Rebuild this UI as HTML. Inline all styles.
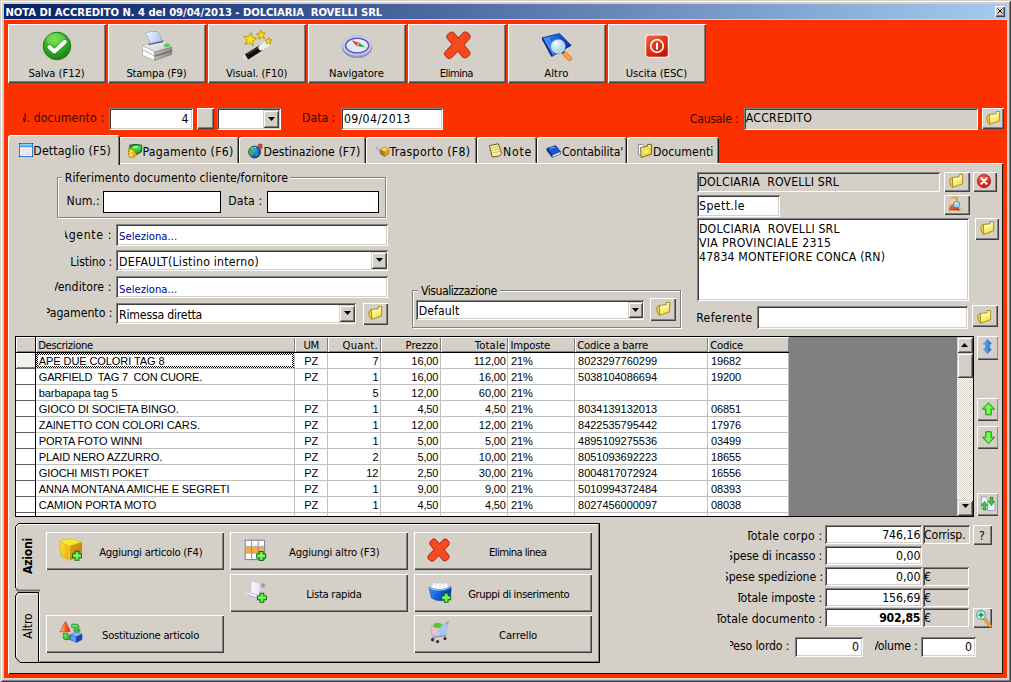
<!DOCTYPE html>
<html><head><meta charset="utf-8"><title>NOTA DI ACCREDITO</title>
<style>
html,body{margin:0;padding:0;}
body{width:1011px;height:682px;overflow:hidden;background:#d4d0c8;position:relative;}
div{position:absolute;box-sizing:border-box;}
svg{position:absolute;overflow:visible;}
.rb{background:#d4d0c8;box-shadow:inset 1px 1px 0 #fff,inset -1px -1px 0 #404040,inset -2px -2px 0 #808080;}
.sk{box-shadow:inset 1px 1px 0 #808080,inset -1px -1px 0 #fff,inset 2px 2px 0 #404040,inset -2px -2px 0 #d4d0c8;}
.sk1{box-shadow:inset 1px 1px 0 #808080,inset -1px -1px 0 #fff;}
.gb{border:1px solid #808080;box-shadow:1px 1px 0 #fff,inset 1px 1px 0 #fff;}

.tab{background:#d4d0c8;border-radius:3px 3px 0 0;box-shadow:inset 1px 1px 0 #fff,inset -1px 0 0 #181818,inset -2px 0 0 #808080;}
.rb2{background:#d4d0c8;box-shadow:inset 1px 1px 0 #fff,inset 0 -1px 0 #404040,inset -1px 0 0 #909090,inset 0 -2px 0 #808080;}
.hd{background:#d4d0c8;box-shadow:inset 1px 1px 0 #fff,inset -1px -1px 0 #808080;}
.dd{background:#d4d0c8;box-shadow:inset 1px 1px 0 #d4d0c8,inset -1px -1px 0 #404040,inset 2px 2px 0 #fff,inset -2px -2px 0 #808080;}

</style></head><body>
<div style="left:0px;top:0px;width:1011px;height:682px;background:#d4d0c8;box-shadow:inset 1px 1px 0 #d4d0c8,inset -1px -1px 0 #404040,inset 2px 2px 0 #fff,inset -2px -2px 0 #808080;"></div>
<div style="left:4px;top:4px;width:1003px;height:15px;background:linear-gradient(90deg,#0a246a 0%,#0a246a 2%,#a6caf0 100%);"></div>
<span style="position:absolute;left:5.50px;top:5px;line-height:16px;white-space:pre;color:#fff;letter-spacing:-0.062px;font-family:'DejaVu Sans Condensed','DejaVu Sans','Liberation Sans',sans-serif;font-size:11.2px;font-weight:bold;font-stretch:condensed;">NOTA DI ACCREDITO N. 4 del 09/04/2013 - DOLCIARIA  ROVELLI SRL</span>
<div class="rb" style="left:995px;top:6px;width:10px;height:11px;"></div>
<svg style="left:997px;top:8px" width="6" height="6"><path d="M0.5 0.5L5.5 5.5M5.5 0.5L0.5 5.5" stroke="#000" stroke-width="1"/></svg>
<div style="left:4px;top:20px;width:1003px;height:658px;background:#fb3200;"></div>
<div class="rb" style="left:8px;top:24px;width:98px;height:59px;"></div>
<svg style="left:41px;top:30px" width="32" height="32" viewBox="0 0 32 32"><defs><radialGradient id="g1" cx="0.4" cy="0.25" r="0.85"><stop offset="0" stop-color="#66dc44"/><stop offset="0.5" stop-color="#2fae22"/><stop offset="1" stop-color="#137414"/></radialGradient></defs><circle cx="16" cy="16" r="13.8" fill="url(#g1)" stroke="#1a741a" stroke-width="0.9"/><ellipse cx="14.6" cy="9.4" rx="9.6" ry="6" fill="#a8f088" opacity="0.28"/><path d="M8.4 17L13.4 21.5L23.9 11.7" fill="none" stroke="#1c7c1c" stroke-width="5.2" stroke-linecap="round" stroke-linejoin="round" opacity="0.45"/><path d="M8.4 17L13.4 21.5L23.9 11.7" fill="none" stroke="#fff" stroke-width="3.9" stroke-linecap="round" stroke-linejoin="round"/></svg>
<span style="position:absolute;left:28.40px;top:66px;line-height:16px;white-space:pre;color:#000;letter-spacing:-0.082px;font-family:'DejaVu Sans Condensed','DejaVu Sans','Liberation Sans',sans-serif;font-size:11.2px;font-weight:normal;font-stretch:condensed;">Salva (F12)</span>
<div class="rb" style="left:108px;top:24px;width:98px;height:59px;"></div>
<svg style="left:136px;top:26px" width="44" height="40" viewBox="0 0 44 40"><defs><linearGradient id="g2" x1="0" y1="0" x2="1" y2="0.4"><stop offset="0" stop-color="#f4f8ff"/><stop offset="1" stop-color="#b4ccf0"/></linearGradient><radialGradient id="g3"><stop offset="0" stop-color="#38b848"/><stop offset="0.6" stop-color="#7cd488"/><stop offset="1" stop-color="#c8e8c8" stop-opacity="0"/></radialGradient><linearGradient id="g4" x1="0" y1="0" x2="1" y2="0"><stop offset="0" stop-color="#b8b8b6"/><stop offset="1" stop-color="#8c8c8a"/></linearGradient><linearGradient id="g5" x1="0" y1="0" x2="1" y2="1"><stop offset="0" stop-color="#f4f4f2"/><stop offset="1" stop-color="#d0d0ce"/></linearGradient></defs><path d="M6.5 19.4L14 17.8L28.2 14.7L35.8 21L18.8 26z" fill="url(#g5)" stroke="#a8a8a8" stroke-width="0.5"/><path d="M13.2 18.2L26.6 15.4" stroke="#50545c" stroke-width="1.6" stroke-linecap="round"/><path d="M9.4 7.2Q15 4.2 21.4 5.6Q25 10 25.8 15L14 17.6Q12.6 11.5 9.4 7.2z" fill="url(#g2)" stroke="#8c9cb8" stroke-width="0.7"/><path d="M6.5 19.4L18.8 26V34.6L6.5 29.5z" fill="#fcfcfc" stroke="#a0a0a0" stroke-width="0.6"/><path d="M18.8 26L35.8 21V28.4L18.8 34.6z" fill="url(#g4)" stroke="#787878" stroke-width="0.6"/><path d="M6.5 23.6L18.8 30.2" fill="none" stroke="#b4b4b2" stroke-width="1"/><path d="M18.8 30.2L35.8 24.8" fill="none" stroke="#6c6c6a" stroke-width="1.3"/><ellipse cx="31" cy="19.4" rx="5" ry="3" fill="url(#g3)"/></svg>
<span style="position:absolute;left:126.40px;top:66px;line-height:16px;white-space:pre;color:#000;letter-spacing:-0.183px;font-family:'DejaVu Sans Condensed','DejaVu Sans','Liberation Sans',sans-serif;font-size:11.2px;font-weight:normal;font-stretch:condensed;">Stampa (F9)</span>
<div class="rb" style="left:208px;top:24px;width:98px;height:59px;"></div>
<svg style="left:236px;top:26px" width="44" height="40" viewBox="0 0 44 40"><path d="M8.8 32L30.4 18.4" stroke="#f4f4f4" stroke-width="5.6" stroke-linecap="round"/><path d="M8.8 32L30.4 18.4" stroke="#b0b0b8" stroke-width="6.4" stroke-linecap="round" opacity="0.35"/><path d="M10.6 30.9L25.2 21.7" stroke="#0c0c0c" stroke-width="6"/><path d="M11.5 28.2L24.6 20" stroke="#4a4a52" stroke-width="1.1"/><path d="M25.2 21.7L30.4 18.4" stroke="#e8f0f0" stroke-width="5.6" stroke-linecap="round"/><polygon points="15.2,6.6 16.3,11.3 20.9,12.5 16.8,15.0 17.1,19.8 13.5,16.6 9.0,18.4 10.9,13.9 7.8,10.2 12.6,10.7" fill="#f8e418" stroke="#b89000" stroke-width="0.9" stroke-linejoin="round"/><polygon points="24.5,4.2 26.2,7.1 29.5,6.9 27.3,9.4 28.5,12.5 25.5,11.1 22.9,13.2 23.3,9.9 20.5,8.2 23.7,7.4" fill="#f8e418" stroke="#b89000" stroke-width="0.9" stroke-linejoin="round"/><polygon points="32.5,11.4 33.5,13.7 35.9,13.9 34.0,15.5 34.6,17.9 32.5,16.6 30.4,17.9 31.0,15.5 29.1,13.9 31.5,13.7" fill="#f8e418" stroke="#b89000" stroke-width="0.9" stroke-linejoin="round"/></svg>
<span style="position:absolute;left:226.00px;top:66px;line-height:16px;white-space:pre;color:#000;letter-spacing:-0.115px;font-family:'DejaVu Sans Condensed','DejaVu Sans','Liberation Sans',sans-serif;font-size:11.2px;font-weight:normal;font-stretch:condensed;">Visual. (F10)</span>
<div class="rb" style="left:308px;top:24px;width:98px;height:59px;"></div>
<svg style="left:336px;top:26px" width="44" height="40" viewBox="0 0 44 40"><ellipse cx="21.2" cy="21.6" rx="14.6" ry="10" fill="#9a9ad0" stroke="#7c7cb8" stroke-width="0.8"/><ellipse cx="21.2" cy="19.4" rx="14.6" ry="10" fill="#d0d0f2" stroke="#a8a8dc" stroke-width="0.6"/><ellipse cx="21.2" cy="19.6" rx="11.6" ry="7.4" fill="#e2e8fc" stroke="#5c5ca4" stroke-width="1.5"/><path d="M12 17.4Q21 10.4 30.4 17" fill="none" stroke="#fff" stroke-width="1" opacity="0.7"/><path d="M15.4 14L23.2 17L20.6 20z" fill="#e63030"/><path d="M23.2 17L29.6 21.2L20.6 20z" fill="#18a030"/><circle cx="21.9" cy="18.5" r="1.1" fill="#f4e060"/></svg>
<span style="position:absolute;left:328.90px;top:66px;line-height:16px;white-space:pre;color:#000;letter-spacing:-0.023px;font-family:'DejaVu Sans Condensed','DejaVu Sans','Liberation Sans',sans-serif;font-size:11.2px;font-weight:normal;font-stretch:condensed;">Navigatore</span>
<div class="rb" style="left:408px;top:24px;width:98px;height:59px;"></div>
<svg style="left:436px;top:26px" width="44" height="40" viewBox="0 0 44 40"><defs><linearGradient id="g6" x1="0" y1="0" x2="0" y2="1"><stop offset="0" stop-color="#fc6838"/><stop offset="1" stop-color="#f03010"/></linearGradient></defs><rect x="-14.6" y="-4" width="29.2" height="8" rx="3.2" transform="translate(22.4 19) rotate(50.3)" fill="#f8461c" stroke="#a82408" stroke-width="1.6"/><rect x="-15.6" y="-4" width="31.2" height="8" rx="3.2" transform="translate(21.4 19.2) rotate(-46.5)" fill="#f8461c" stroke="#a82408" stroke-width="1.6"/><rect x="-14.6" y="-4" width="29.2" height="8" rx="3.2" transform="translate(22.4 19) rotate(50.3)" fill="#f84a20"/><rect x="-15.6" y="-4" width="31.2" height="8" rx="3.2" transform="translate(21.4 19.2) rotate(-46.5)" fill="#f84a20"/></svg>
<span style="position:absolute;left:439.70px;top:66px;line-height:16px;white-space:pre;color:#000;letter-spacing:-0.552px;font-family:'DejaVu Sans Condensed','DejaVu Sans','Liberation Sans',sans-serif;font-size:11.2px;font-weight:normal;font-stretch:condensed;">Elimina</span>
<div class="rb" style="left:508px;top:24px;width:98px;height:59px;"></div>
<svg style="left:536px;top:26px" width="44" height="40" viewBox="0 0 44 40"><defs><linearGradient id="g7" x1="0" y1="0.2" x2="1" y2="0.6"><stop offset="0" stop-color="#3488f4"/><stop offset="0.5" stop-color="#1458dc"/><stop offset="1" stop-color="#0830a0"/></linearGradient><radialGradient id="g8" cx="0.35" cy="0.3" r="0.8"><stop offset="0" stop-color="#f0fbff"/><stop offset="1" stop-color="#8ccae8"/></radialGradient></defs><path d="M6 11.8L23.4 7.6L35.2 19.4L15.8 30.5z" fill="url(#g7)" stroke="#0a2c94" stroke-width="0.8" stroke-linejoin="round"/><path d="M6.4 12.6L16 30.2" stroke="#0a2a88" stroke-width="1.6"/><path d="M9 12.4L18.2 29.4M11.8 11.6L20.6 28.2" stroke="#7cb4fc" stroke-width="1.1" opacity="0.85"/><path d="M27 26L29 28" stroke="#1c3c84" stroke-width="3.2" stroke-linecap="round"/><path d="M29.2 28.2L33.6 32.4" stroke="#d87818" stroke-width="4.8" stroke-linecap="round"/><path d="M29.2 28.2L33.6 32.4" stroke="#f8a848" stroke-width="3" stroke-linecap="round"/><circle cx="22" cy="20.4" r="6.5" fill="url(#g8)" stroke="#d4e6f8" stroke-width="1.5"/><circle cx="22" cy="20.4" r="7.4" fill="none" stroke="#5c7cac" stroke-width="0.6"/></svg>
<span style="position:absolute;left:544.20px;top:66px;line-height:16px;white-space:pre;color:#000;letter-spacing:0.107px;font-family:'DejaVu Sans Condensed','DejaVu Sans','Liberation Sans',sans-serif;font-size:11.2px;font-weight:normal;font-stretch:condensed;">Altro</span>
<div class="rb" style="left:608px;top:24px;width:98px;height:59px;"></div>
<svg style="left:636px;top:26px" width="44" height="40" viewBox="0 0 44 40"><defs><linearGradient id="g9" x1="0" y1="0" x2="0.6" y2="1"><stop offset="0" stop-color="#f86840"/><stop offset="0.5" stop-color="#e43820"/><stop offset="1" stop-color="#c01808"/></linearGradient></defs><rect x="9.2" y="8.4" width="23.6" height="23.4" rx="3" fill="#fff5ec"/><rect x="10.2" y="9.4" width="21.6" height="21.4" rx="2.5" fill="url(#g9)"/><circle cx="21" cy="20" r="6.3" fill="none" stroke="#fff8e8" stroke-width="1.7"/><path d="M21 16.8V23.4" stroke="#fff" stroke-width="2"/></svg>
<span style="position:absolute;left:625.80px;top:66px;line-height:16px;white-space:pre;color:#000;letter-spacing:-0.045px;font-family:'DejaVu Sans Condensed','DejaVu Sans','Liberation Sans',sans-serif;font-size:11.2px;font-weight:normal;font-stretch:condensed;">Uscita (ESC)</span>
<div style="left:22.8px;top:110px;width:84.2px;height:16px;overflow:hidden"><span style="position:absolute;right:2.78px;top:0;line-height:16px;white-space:pre;color:#360900;letter-spacing:0.118px;font-family:'DejaVu Sans Condensed','DejaVu Sans','Liberation Sans',sans-serif;font-size:12.2px;font-weight:normal;font-stretch:condensed;">N. documento :</span></div>
<div class="sk" style="left:109px;top:108px;width:84px;height:22px;background:#fff;"></div>
<span style="position:absolute;left:181.52px;top:111px;line-height:16px;white-space:pre;color:#000;letter-spacing:-0.1px;font-family:'DejaVu Sans Condensed','DejaVu Sans','Liberation Sans',sans-serif;font-size:12.2px;font-weight:normal;font-stretch:condensed;">4</span>
<div class="rb" style="left:197px;top:108px;width:17px;height:21px;"></div>
<div class="sk" style="left:217px;top:108px;width:64px;height:22px;background:#fff;"></div>
<div class="dd" style="left:263px;top:110px;width:16px;height:18px;"></div>
<svg style="left:267.5px;top:117px" width="7" height="4"><path d="M0 0h7L3.5 4z" fill="#000"/></svg>
<span style="position:absolute;left:302.10px;top:110px;line-height:16px;white-space:pre;color:#360900;letter-spacing:-0.032px;font-family:'DejaVu Sans Condensed','DejaVu Sans','Liberation Sans',sans-serif;font-size:12.2px;font-weight:normal;font-stretch:condensed;">Data :</span>
<div class="sk" style="left:341px;top:108px;width:102px;height:22px;background:#fff;"></div>
<span style="position:absolute;left:343.90px;top:111px;line-height:16px;white-space:pre;color:#000;letter-spacing:0.357px;font-family:'DejaVu Sans Condensed','DejaVu Sans','Liberation Sans',sans-serif;font-size:12.2px;font-weight:normal;font-stretch:condensed;">09/04/2013</span>
<span style="position:absolute;left:689.80px;top:111px;line-height:16px;white-space:pre;color:#360900;letter-spacing:-0.242px;font-family:'DejaVu Sans Condensed','DejaVu Sans','Liberation Sans',sans-serif;font-size:12.2px;font-weight:normal;font-stretch:condensed;">Causale :</span>
<div class="sk" style="left:744px;top:108px;width:234px;height:22px;background:#d4d0c8;"></div>
<span style="position:absolute;left:745.70px;top:110px;line-height:16px;white-space:pre;color:#000;letter-spacing:0.255px;font-family:'DejaVu Sans Condensed','DejaVu Sans','Liberation Sans',sans-serif;font-size:12.2px;font-weight:normal;font-stretch:condensed;">ACCREDITO</span>
<div class="rb" style="left:982px;top:108px;width:22px;height:21px;"></div>
<svg style="left:986px;top:111px" width="14" height="14" viewBox="0 0 14 14"><defs><linearGradient id="g10" x1="0.2" y1="0" x2="0.7" y2="1"><stop offset="0" stop-color="#fffbd8"/><stop offset="0.55" stop-color="#fbef78"/><stop offset="1" stop-color="#f4dc28"/></linearGradient></defs><path d="M3.3 3.4L10.1 2.8V0.5H13.6V9.8L3.7 13.4z" fill="url(#g10)" stroke="#a08a1c" stroke-width="0.9" stroke-linejoin="round"/><path d="M0.5 5.6L3.3 3.4L3.7 13.4L1.6 11z" fill="#f0d648" stroke="#a08a1c" stroke-width="0.9" stroke-linejoin="round"/><path d="M5.2 5.4L12.2 4.6" stroke="#fffce0" stroke-width="1" opacity="0.8"/></svg>
<div style="left:8px;top:163px;width:995px;height:511px;background:#d4d0c8;box-shadow:inset 1px 1px 0 #fff,inset -1px -1px 0 #101010;"></div>
<div class="tab" style="left:119px;top:137px;width:120px;height:26px;"></div>
<svg style="left:128px;top:144px" width="14" height="14" viewBox="0 0 14 14"><defs><linearGradient id="g11" x1="0" y1="0" x2="0.4" y2="1"><stop offset="0" stop-color="#168c16"/><stop offset="0.55" stop-color="#44e044"/><stop offset="1" stop-color="#18a018"/></linearGradient></defs><path d="M1.8 1.2L6.6 0.4L13.6 1.2V7.6L8.9 10.5L2 6z" fill="url(#g11)" stroke="#0a4c0a" stroke-width="0.9" stroke-linejoin="round"/><path d="M5.4 3.4L9.4 2.8" stroke="#e0ffe0" stroke-width="1.5" stroke-linecap="round" opacity="0.85"/><path d="M0.4 4.8L3 4.6L6 6.6L8.9 10.5L6 13.2L1.6 13.4L0.4 10z" fill="#f2c024" stroke="#604400" stroke-width="0.8" stroke-linejoin="round" stroke-dasharray="1.6 1.2"/><circle cx="6" cy="10.4" r="1.9" fill="#f89c20"/><circle cx="3" cy="10.8" r="2" fill="#fbe050"/><circle cx="3.4" cy="7" r="1.5" fill="#f8d840"/></svg>
<span style="position:absolute;left:142.50px;top:144px;line-height:16px;white-space:pre;color:#000;letter-spacing:0.279px;font-family:'DejaVu Sans Condensed','DejaVu Sans','Liberation Sans',sans-serif;font-size:12.2px;font-weight:normal;font-stretch:condensed;">Pagamento (F6)</span>
<div class="tab" style="left:239px;top:137px;width:127px;height:26px;"></div>
<svg style="left:248px;top:142px" width="16" height="16" viewBox="0 0 16 16"><defs><radialGradient id="g12" cx="0.42" cy="0.36" r="0.75"><stop offset="0" stop-color="#48b8f8"/><stop offset="0.55" stop-color="#1868cc"/><stop offset="1" stop-color="#0a2f88"/></radialGradient></defs><circle cx="6.6" cy="10" r="5.9" fill="url(#g12)" stroke="#0c2858" stroke-width="0.8"/><path d="M1.2 9Q2.4 5.2 5.6 4.8Q7.2 6.4 5.4 8.6Q6 10.6 4.6 12Q4.6 14 3.4 14.6Q0.8 12.6 1.2 9z" fill="#34b83c"/><path d="M7.4 11Q9.4 10 10.6 11.6Q10 13.8 8.4 14.8Q7 13.2 7.4 11z" fill="#2ea838" opacity="0.85"/><path d="M3 6.6Q5.2 4.6 8 5.4" fill="none" stroke="#c8f0ff" stroke-width="0.9" opacity="0.7"/><path d="M10.4 2.2H14V5.8L12.4 7.4L10.8 6z" fill="#e8482c" stroke="#7a1c08" stroke-width="0.6" stroke-linejoin="round"/></svg>
<span style="position:absolute;left:263.50px;top:144px;line-height:16px;white-space:pre;color:#000;letter-spacing:0.022px;font-family:'DejaVu Sans Condensed','DejaVu Sans','Liberation Sans',sans-serif;font-size:12.2px;font-weight:normal;font-stretch:condensed;">Destinazione (F7)</span>
<div class="tab" style="left:366px;top:137px;width:111px;height:26px;"></div>
<svg style="left:374px;top:142px" width="16" height="16" viewBox="0 0 16 16"><path d="M0.6 2.6L8 10" stroke="#c4ccd6" stroke-width="3.4" stroke-linecap="round" opacity="0.75"/><path d="M2.4 5.6L7 10.4" stroke="#9098a4" stroke-width="1.2" stroke-linecap="round" opacity="0.7"/><path d="M10.6 5L14.8 7.2V11.6L10.6 14.4L6.6 11.8V7.4z" fill="#b87c10" stroke="#6a4800" stroke-width="0.6" stroke-linejoin="round"/><path d="M10.6 9.6L14.8 7.2V11.6L10.6 14.4z" fill="#d8a018"/><path d="M10.6 5L14.8 7.2L10.6 9.6L6.6 7.4z" fill="#fbdc40"/></svg>
<span style="position:absolute;left:389.50px;top:144px;line-height:16px;white-space:pre;color:#000;letter-spacing:0.32px;font-family:'DejaVu Sans Condensed','DejaVu Sans','Liberation Sans',sans-serif;font-size:12.2px;font-weight:normal;font-stretch:condensed;">Trasporto (F8)</span>
<div class="tab" style="left:477px;top:137px;width:60px;height:26px;"></div>
<svg style="left:488px;top:143px" width="16" height="16" viewBox="0 0 16 16"><path d="M1.4 2.6L10.4 0.8L13.6 10.6L11.4 13L4.2 14z" fill="#f8f0a0" stroke="#5a4a10" stroke-width="0.9" stroke-linejoin="round"/><path d="M3.6 5L10.6 3.6M4.2 7.4L11.4 6M5 9.8L12 8.4" stroke="#c8b860" stroke-width="0.8"/></svg>
<span style="position:absolute;left:503.00px;top:144px;line-height:16px;white-space:pre;color:#000;letter-spacing:0.782px;font-family:'DejaVu Sans Condensed','DejaVu Sans','Liberation Sans',sans-serif;font-size:12.2px;font-weight:normal;font-stretch:condensed;">Note</span>
<div class="tab" style="left:537px;top:137px;width:90px;height:26px;"></div>
<svg style="left:546px;top:144px" width="16" height="16" viewBox="0 0 16 16"><path d="M1 4.4L9.6 1.6L14.6 7.6L6.2 11z" fill="#1858d0" stroke="#0a2a80" stroke-width="0.7" stroke-linejoin="round"/><path d="M1 4.4L6.2 11V13.4L1 6.8z" fill="#0a3aa8" stroke="#0a2a80" stroke-width="0.6"/><path d="M6.2 11L14.6 7.6V10L6.2 13.4z" fill="#e8eef8" stroke="#0a2a80" stroke-width="0.6"/><path d="M4.6 4.4L9 3" stroke="#78b0f8" stroke-width="1.2"/></svg>
<span style="position:absolute;left:562.00px;top:144px;line-height:16px;white-space:pre;color:#000;letter-spacing:-0.106px;font-family:'DejaVu Sans Condensed','DejaVu Sans','Liberation Sans',sans-serif;font-size:12.2px;font-weight:normal;font-stretch:condensed;">Contabilita'</span>
<div class="tab" style="left:627px;top:137px;width:92px;height:26px;"></div>
<svg style="left:638px;top:144px" width="14" height="14" viewBox="0 0 14 14"><defs><linearGradient id="g13" x1="0" y1="0" x2="0.8" y2="1"><stop offset="0" stop-color="#fdf6b0"/><stop offset="1" stop-color="#f0d818"/></linearGradient></defs><path d="M0.4 0.4H4.6L6.4 2V10.8H0.4z" fill="#fff" stroke="#60607c" stroke-width="0.7"/><path d="M2.6 3.6L6.6 2.8L9.4 2.2V0.4H13.5V10.2L3 13.4z" fill="url(#g13)" stroke="#6a5a10" stroke-width="0.9" stroke-linejoin="round"/><path d="M4.6 6L11.4 4.4V8.8L5 10.8z" fill="#f8ec78" stroke="#c8b040" stroke-width="0.5" opacity="0.9"/></svg>
<span style="position:absolute;left:653.00px;top:144px;line-height:16px;white-space:pre;color:#000;letter-spacing:0.055px;font-family:'DejaVu Sans Condensed','DejaVu Sans','Liberation Sans',sans-serif;font-size:12.2px;font-weight:normal;font-stretch:condensed;">Documenti</span>
<div class="tab" style="left:8px;top:135px;width:112px;height:30px;"></div>
<div style="left:9px;top:162px;width:109px;height:4px;background:#d4d0c8;"></div>
<svg style="left:19px;top:143px" width="14" height="14" viewBox="0 0 14 14"><defs><linearGradient id="g14" x1="0" y1="0" x2="0" y2="1"><stop offset="0" stop-color="#9cdcff"/><stop offset="1" stop-color="#3c98ec"/></linearGradient></defs><rect x="0.5" y="0.5" width="13" height="13" fill="#fbfaff" stroke="#2484d8" stroke-width="1"/><rect x="1" y="1" width="12" height="2.8" fill="url(#g14)"/><path d="M1 3.9H13" stroke="#3890e4" stroke-width="0.8"/><path d="M1 6.6H13M1 9H13M1 11.4H13" stroke="#d4c4f0" stroke-width="0.7"/><path d="M4 4.4V13M7 4.4V13M10 4.4V13" stroke="#e4d8f4" stroke-width="0.7"/><rect x="4.4" y="7" width="2.2" height="1.6" fill="#fbf0b0" opacity="0.8"/><rect x="7.4" y="9.4" width="2.2" height="1.6" fill="#f8c8e0" opacity="0.8"/><path d="M0.5 0.5h0.01M13.5 0.5h0.01M0.5 13.5h0.01M13.5 13.5h0.01" stroke="#0c3c70" stroke-width="1.2" stroke-linecap="square"/></svg>
<span style="position:absolute;left:33.30px;top:143px;line-height:16px;white-space:pre;color:#000;letter-spacing:0.147px;font-family:'DejaVu Sans Condensed','DejaVu Sans','Liberation Sans',sans-serif;font-size:12.2px;font-weight:normal;font-stretch:condensed;">Dettaglio (F5)</span>
<div class="gb" style="left:57px;top:177px;width:329px;height:41px;"></div>
<div style="left:62px;top:172px;width:228px;height:12px;background:#d4d0c8;"></div>
<span style="position:absolute;left:64.80px;top:170px;line-height:16px;white-space:pre;color:#000;letter-spacing:0.068px;font-family:'DejaVu Sans Condensed','DejaVu Sans','Liberation Sans',sans-serif;font-size:12.2px;font-weight:normal;font-stretch:condensed;">Riferimento documento cliente/fornitore</span>
<span style="position:absolute;left:66.40px;top:193px;line-height:16px;white-space:pre;color:#000;letter-spacing:0.046px;font-family:'DejaVu Sans Condensed','DejaVu Sans','Liberation Sans',sans-serif;font-size:12.2px;font-weight:normal;font-stretch:condensed;">Num.:</span>
<div style="left:103px;top:191px;width:118px;height:22px;background:#fff;border:1px solid #000;"></div>
<span style="position:absolute;left:228.20px;top:193px;line-height:16px;white-space:pre;color:#000;letter-spacing:0.148px;font-family:'DejaVu Sans Condensed','DejaVu Sans','Liberation Sans',sans-serif;font-size:12.2px;font-weight:normal;font-stretch:condensed;">Data :</span>
<div style="left:267px;top:191px;width:112px;height:22px;background:#fff;border:1px solid #000;"></div>
<div style="left:65.2px;top:227px;width:48.8px;height:16px;overflow:hidden"><span style="position:absolute;right:1.85px;top:0;line-height:16px;white-space:pre;color:#000;letter-spacing:0.652px;font-family:'DejaVu Sans Condensed','DejaVu Sans','Liberation Sans',sans-serif;font-size:12.2px;font-weight:normal;font-stretch:condensed;">Agente :</span></div>
<div class="sk" style="left:116px;top:224px;width:272px;height:22px;background:#fff;"></div>
<span style="position:absolute;left:119.10px;top:229px;line-height:16px;white-space:pre;color:#00009c;letter-spacing:0.004px;font-family:'DejaVu Sans Condensed','DejaVu Sans','Liberation Sans',sans-serif;font-size:11.2px;font-weight:normal;font-stretch:condensed;">Seleziona...</span>
<span style="position:absolute;left:70.30px;top:254px;line-height:16px;white-space:pre;color:#000;letter-spacing:-0.131px;font-family:'DejaVu Sans Condensed','DejaVu Sans','Liberation Sans',sans-serif;font-size:12.2px;font-weight:normal;font-stretch:condensed;">Listino :</span>
<div class="sk" style="left:116px;top:250px;width:272px;height:21px;background:#fff;"></div>
<span style="position:absolute;left:119.10px;top:254px;line-height:16px;white-space:pre;color:#000;letter-spacing:0.243px;font-family:'DejaVu Sans Condensed','DejaVu Sans','Liberation Sans',sans-serif;font-size:12.2px;font-weight:normal;font-stretch:condensed;">DEFAULT(Listino interno)</span>
<div class="dd" style="left:371px;top:252px;width:16px;height:17px;"></div>
<svg style="left:375.5px;top:258px" width="7" height="4"><path d="M0 0h7L3.5 4z" fill="#000"/></svg>
<div style="left:55.2px;top:279px;width:58.8px;height:16px;overflow:hidden"><span style="position:absolute;right:2.40px;top:0;line-height:16px;white-space:pre;color:#000;letter-spacing:0.103px;font-family:'DejaVu Sans Condensed','DejaVu Sans','Liberation Sans',sans-serif;font-size:12.2px;font-weight:normal;font-stretch:condensed;">Venditore :</span></div>
<div class="sk" style="left:116px;top:276px;width:272px;height:22px;background:#fff;"></div>
<span style="position:absolute;left:119.10px;top:282px;line-height:16px;white-space:pre;color:#00009c;letter-spacing:0.004px;font-family:'DejaVu Sans Condensed','DejaVu Sans','Liberation Sans',sans-serif;font-size:11.2px;font-weight:normal;font-stretch:condensed;">Seleziona...</span>
<div style="left:47.2px;top:305px;width:66.8px;height:16px;overflow:hidden"><span style="position:absolute;right:1.52px;top:0;line-height:16px;white-space:pre;color:#000;letter-spacing:-0.019px;font-family:'DejaVu Sans Condensed','DejaVu Sans','Liberation Sans',sans-serif;font-size:12.2px;font-weight:normal;font-stretch:condensed;">Pagamento :</span></div>
<div class="sk" style="left:116px;top:303px;width:240px;height:21px;background:#fff;"></div>
<span style="position:absolute;left:119.10px;top:307px;line-height:16px;white-space:pre;color:#000;letter-spacing:-0.202px;font-family:'DejaVu Sans Condensed','DejaVu Sans','Liberation Sans',sans-serif;font-size:12.2px;font-weight:normal;font-stretch:condensed;">Rimessa diretta</span>
<div class="dd" style="left:339px;top:305px;width:16px;height:17px;"></div>
<svg style="left:343.5px;top:311px" width="7" height="4"><path d="M0 0h7L3.5 4z" fill="#000"/></svg>
<div class="rb" style="left:363px;top:303px;width:25px;height:22px;"></div>
<svg style="left:368px;top:306px" width="14" height="14" viewBox="0 0 14 14"><defs><linearGradient id="g15" x1="0.2" y1="0" x2="0.7" y2="1"><stop offset="0" stop-color="#fffbd8"/><stop offset="0.55" stop-color="#fbef78"/><stop offset="1" stop-color="#f4dc28"/></linearGradient></defs><path d="M3.3 3.4L10.1 2.8V0.5H13.6V9.8L3.7 13.4z" fill="url(#g15)" stroke="#a08a1c" stroke-width="0.9" stroke-linejoin="round"/><path d="M0.5 5.6L3.3 3.4L3.7 13.4L1.6 11z" fill="#f0d648" stroke="#a08a1c" stroke-width="0.9" stroke-linejoin="round"/><path d="M5.2 5.4L12.2 4.6" stroke="#fffce0" stroke-width="1" opacity="0.8"/></svg>
<div class="gb" style="left:412px;top:290px;width:269px;height:38px;"></div>
<div style="left:418px;top:285px;width:82px;height:12px;background:#d4d0c8;"></div>
<span style="position:absolute;left:421.10px;top:283px;line-height:16px;white-space:pre;color:#000;letter-spacing:-0.5px;font-family:'DejaVu Sans Condensed','DejaVu Sans','Liberation Sans',sans-serif;font-size:12.2px;font-weight:normal;font-stretch:condensed;">Visualizzazione</span>
<div class="sk" style="left:416px;top:300px;width:228px;height:20px;background:#fff;"></div>
<span style="position:absolute;left:418.80px;top:303px;line-height:16px;white-space:pre;color:#000;letter-spacing:0.056px;font-family:'DejaVu Sans Condensed','DejaVu Sans','Liberation Sans',sans-serif;font-size:12.2px;font-weight:normal;font-stretch:condensed;">Default</span>
<div class="dd" style="left:628px;top:302px;width:15px;height:16px;"></div>
<svg style="left:631.5px;top:308px" width="7" height="4"><path d="M0 0h7L3.5 4z" fill="#000"/></svg>
<div class="rb" style="left:650px;top:298px;width:26px;height:23px;"></div>
<svg style="left:656px;top:302px" width="14" height="14" viewBox="0 0 14 14"><defs><linearGradient id="g16" x1="0.2" y1="0" x2="0.7" y2="1"><stop offset="0" stop-color="#fffbd8"/><stop offset="0.55" stop-color="#fbef78"/><stop offset="1" stop-color="#f4dc28"/></linearGradient></defs><path d="M3.3 3.4L10.1 2.8V0.5H13.6V9.8L3.7 13.4z" fill="url(#g16)" stroke="#a08a1c" stroke-width="0.9" stroke-linejoin="round"/><path d="M0.5 5.6L3.3 3.4L3.7 13.4L1.6 11z" fill="#f0d648" stroke="#a08a1c" stroke-width="0.9" stroke-linejoin="round"/><path d="M5.2 5.4L12.2 4.6" stroke="#fffce0" stroke-width="1" opacity="0.8"/></svg>
<div class="sk" style="left:697px;top:172px;width:243px;height:20px;background:#d4d0c8;"></div>
<span style="position:absolute;left:698.40px;top:174px;line-height:16px;white-space:pre;color:#000;letter-spacing:0.169px;font-family:'DejaVu Sans Condensed','DejaVu Sans','Liberation Sans',sans-serif;font-size:12.2px;font-weight:normal;font-stretch:condensed;">DOLCIARIA  ROVELLI SRL</span>
<div class="rb" style="left:944px;top:172px;width:26px;height:20px;"></div>
<svg style="left:949px;top:174px" width="14" height="14" viewBox="0 0 14 14"><defs><linearGradient id="g17" x1="0.2" y1="0" x2="0.7" y2="1"><stop offset="0" stop-color="#fffbd8"/><stop offset="0.55" stop-color="#fbef78"/><stop offset="1" stop-color="#f4dc28"/></linearGradient></defs><path d="M3.3 3.4L10.1 2.8V0.5H13.6V9.8L3.7 13.4z" fill="url(#g17)" stroke="#a08a1c" stroke-width="0.9" stroke-linejoin="round"/><path d="M0.5 5.6L3.3 3.4L3.7 13.4L1.6 11z" fill="#f0d648" stroke="#a08a1c" stroke-width="0.9" stroke-linejoin="round"/><path d="M5.2 5.4L12.2 4.6" stroke="#fffce0" stroke-width="1" opacity="0.8"/></svg>
<div class="rb" style="left:973px;top:172px;width:24px;height:20px;"></div>
<svg style="left:976.2px;top:173.3px" width="16" height="16" viewBox="0 0 16 16"><defs><radialGradient id="g18" cx="0.4" cy="0.3" r="0.8"><stop offset="0" stop-color="#f86050"/><stop offset="1" stop-color="#c80808"/></radialGradient></defs><circle cx="8" cy="8" r="6.7" fill="url(#g18)" stroke="#a81010" stroke-width="0.6"/><path d="M5.3 5.3L10.7 10.7M10.7 5.3L5.3 10.7" stroke="#fff" stroke-width="2" stroke-linecap="round"/></svg>
<div class="sk" style="left:697px;top:195px;width:83px;height:22px;background:#fff;"></div>
<span style="position:absolute;left:699.00px;top:198px;line-height:16px;white-space:pre;color:#000;letter-spacing:0.436px;font-family:'DejaVu Sans Condensed','DejaVu Sans','Liberation Sans',sans-serif;font-size:12.2px;font-weight:normal;font-stretch:condensed;">Spett.le</span>
<div class="rb" style="left:944px;top:195px;width:26px;height:20px;"></div>
<svg style="left:948px;top:196px" width="16" height="16" viewBox="0 0 16 16"><defs><linearGradient id="g19" x1="0" y1="0" x2="1" y2="1"><stop offset="0" stop-color="#f08040"/><stop offset="1" stop-color="#b83410"/></linearGradient></defs><ellipse cx="6.6" cy="2.8" rx="3.7" ry="2.3" fill="#d8a838"/><circle cx="5.4" cy="5" r="2.7" fill="#f8cca8"/><path d="M0.8 14.6Q0.8 9.2 4.6 8.2L8.4 8.4Q11.4 11.6 12 14.6z" fill="url(#g19)"/><path d="M11 11.4L14.2 13.8" stroke="#d8b48c" stroke-width="1.6" stroke-linecap="round"/><circle cx="8.5" cy="8.4" r="3.2" fill="#a4dcf8" stroke="#4c6ca0" stroke-width="0.8"/><path d="M6.8 7.2Q8 5.8 9.8 6.6" fill="none" stroke="#fff" stroke-width="0.8" opacity="0.8"/></svg>
<div class="sk" style="left:697px;top:218px;width:272px;height:83px;background:#fff;"></div>
<span style="position:absolute;left:699.00px;top:221px;line-height:16px;white-space:pre;color:#000;letter-spacing:0.169px;font-family:'DejaVu Sans Condensed','DejaVu Sans','Liberation Sans',sans-serif;font-size:12.2px;font-weight:normal;font-stretch:condensed;">DOLCIARIA  ROVELLI SRL</span>
<span style="position:absolute;left:699.00px;top:235px;line-height:16px;white-space:pre;color:#000;letter-spacing:0.311px;font-family:'DejaVu Sans Condensed','DejaVu Sans','Liberation Sans',sans-serif;font-size:12.2px;font-weight:normal;font-stretch:condensed;">VIA PROVINCIALE 2315</span>
<span style="position:absolute;left:699.00px;top:249px;line-height:16px;white-space:pre;color:#000;letter-spacing:0.155px;font-family:'DejaVu Sans Condensed','DejaVu Sans','Liberation Sans',sans-serif;font-size:12.2px;font-weight:normal;font-stretch:condensed;">47834 MONTEFIORE CONCA (RN)</span>
<div class="rb" style="left:975px;top:218px;width:24px;height:22px;"></div>
<svg style="left:980px;top:221px" width="14" height="14" viewBox="0 0 14 14"><defs><linearGradient id="g20" x1="0.2" y1="0" x2="0.7" y2="1"><stop offset="0" stop-color="#fffbd8"/><stop offset="0.55" stop-color="#fbef78"/><stop offset="1" stop-color="#f4dc28"/></linearGradient></defs><path d="M3.3 3.4L10.1 2.8V0.5H13.6V9.8L3.7 13.4z" fill="url(#g20)" stroke="#a08a1c" stroke-width="0.9" stroke-linejoin="round"/><path d="M0.5 5.6L3.3 3.4L3.7 13.4L1.6 11z" fill="#f0d648" stroke="#a08a1c" stroke-width="0.9" stroke-linejoin="round"/><path d="M5.2 5.4L12.2 4.6" stroke="#fffce0" stroke-width="1" opacity="0.8"/></svg>
<span style="position:absolute;left:696.20px;top:310px;line-height:16px;white-space:pre;color:#000;letter-spacing:0.337px;font-family:'DejaVu Sans Condensed','DejaVu Sans','Liberation Sans',sans-serif;font-size:12.2px;font-weight:normal;font-stretch:condensed;">Referente</span>
<div class="sk" style="left:757px;top:306px;width:211px;height:23px;background:#fff;"></div>
<div class="rb" style="left:972px;top:305px;width:26px;height:22px;"></div>
<svg style="left:977px;top:309.5px" width="14" height="14" viewBox="0 0 14 14"><defs><linearGradient id="g21" x1="0.2" y1="0" x2="0.7" y2="1"><stop offset="0" stop-color="#fffbd8"/><stop offset="0.55" stop-color="#fbef78"/><stop offset="1" stop-color="#f4dc28"/></linearGradient></defs><path d="M3.3 3.4L10.1 2.8V0.5H13.6V9.8L3.7 13.4z" fill="url(#g21)" stroke="#a08a1c" stroke-width="0.9" stroke-linejoin="round"/><path d="M0.5 5.6L3.3 3.4L3.7 13.4L1.6 11z" fill="#f0d648" stroke="#a08a1c" stroke-width="0.9" stroke-linejoin="round"/><path d="M5.2 5.4L12.2 4.6" stroke="#fffce0" stroke-width="1" opacity="0.8"/></svg>
<div style="left:15px;top:336px;width:959px;height:181px;background:#fff;border:1px solid #000;"></div>
<div style="left:789px;top:337px;width:168px;height:179px;background:#808080;"></div>
<div class="hd" style="left:16px;top:337px;width:20px;height:15px;"></div>
<div class="hd" style="left:36px;top:337px;width:259px;height:15px;"></div>
<span style="position:absolute;left:38.20px;top:338px;line-height:16px;white-space:pre;color:#000;letter-spacing:-0.337px;font-family:'DejaVu Sans Condensed','DejaVu Sans','Liberation Sans',sans-serif;font-size:11.2px;font-weight:normal;font-stretch:condensed;">Descrizione</span>
<div class="hd" style="left:295px;top:337px;width:33px;height:15px;"></div>
<span style="position:absolute;left:303.50px;top:338px;line-height:16px;white-space:pre;color:#000;letter-spacing:-0.262px;font-family:'DejaVu Sans Condensed','DejaVu Sans','Liberation Sans',sans-serif;font-size:11.2px;font-weight:normal;font-stretch:condensed;">UM</span>
<div class="hd" style="left:328px;top:337px;width:53px;height:15px;"></div>
<span style="position:absolute;left:342.50px;top:338px;line-height:16px;white-space:pre;color:#000;letter-spacing:0.24px;font-family:'DejaVu Sans Condensed','DejaVu Sans','Liberation Sans',sans-serif;font-size:11.2px;font-weight:normal;font-stretch:condensed;">Quant.</span>
<div class="hd" style="left:381px;top:337px;width:60px;height:15px;"></div>
<span style="position:absolute;left:405.60px;top:338px;line-height:16px;white-space:pre;color:#000;letter-spacing:0.002px;font-family:'DejaVu Sans Condensed','DejaVu Sans','Liberation Sans',sans-serif;font-size:11.2px;font-weight:normal;font-stretch:condensed;">Prezzo</span>
<div class="hd" style="left:441px;top:337px;width:67px;height:15px;"></div>
<span style="position:absolute;left:474.80px;top:338px;line-height:16px;white-space:pre;color:#000;letter-spacing:0.157px;font-family:'DejaVu Sans Condensed','DejaVu Sans','Liberation Sans',sans-serif;font-size:11.2px;font-weight:normal;font-stretch:condensed;">Totale</span>
<div class="hd" style="left:508px;top:337px;width:67px;height:15px;"></div>
<span style="position:absolute;left:510.50px;top:338px;line-height:16px;white-space:pre;color:#000;letter-spacing:-0.151px;font-family:'DejaVu Sans Condensed','DejaVu Sans','Liberation Sans',sans-serif;font-size:11.2px;font-weight:normal;font-stretch:condensed;">Imposte</span>
<div class="hd" style="left:575px;top:337px;width:133px;height:15px;"></div>
<span style="position:absolute;left:577.20px;top:338px;line-height:16px;white-space:pre;color:#000;letter-spacing:-0.173px;font-family:'DejaVu Sans Condensed','DejaVu Sans','Liberation Sans',sans-serif;font-size:11.2px;font-weight:normal;font-stretch:condensed;">Codice a barre</span>
<div class="hd" style="left:708px;top:337px;width:81px;height:15px;"></div>
<span style="position:absolute;left:710.20px;top:338px;line-height:16px;white-space:pre;color:#000;letter-spacing:-0.202px;font-family:'DejaVu Sans Condensed','DejaVu Sans','Liberation Sans',sans-serif;font-size:11.2px;font-weight:normal;font-stretch:condensed;">Codice</span>
<div style="left:16px;top:352px;width:773px;height:1px;background:#000;"></div>
<div style="left:36px;top:368px;width:753px;height:1px;background:#c0c0c0;"></div>
<div style="left:16px;top:368px;width:19px;height:1px;background:#606060;"></div>
<div style="left:36px;top:384px;width:753px;height:1px;background:#c0c0c0;"></div>
<div style="left:16px;top:384px;width:19px;height:1px;background:#606060;"></div>
<div style="left:36px;top:400px;width:753px;height:1px;background:#c0c0c0;"></div>
<div style="left:16px;top:400px;width:19px;height:1px;background:#606060;"></div>
<div style="left:36px;top:416px;width:753px;height:1px;background:#c0c0c0;"></div>
<div style="left:16px;top:416px;width:19px;height:1px;background:#606060;"></div>
<div style="left:36px;top:432px;width:753px;height:1px;background:#c0c0c0;"></div>
<div style="left:16px;top:432px;width:19px;height:1px;background:#606060;"></div>
<div style="left:36px;top:448px;width:753px;height:1px;background:#c0c0c0;"></div>
<div style="left:16px;top:448px;width:19px;height:1px;background:#606060;"></div>
<div style="left:36px;top:464px;width:753px;height:1px;background:#c0c0c0;"></div>
<div style="left:16px;top:464px;width:19px;height:1px;background:#606060;"></div>
<div style="left:36px;top:480px;width:753px;height:1px;background:#c0c0c0;"></div>
<div style="left:16px;top:480px;width:19px;height:1px;background:#606060;"></div>
<div style="left:36px;top:496px;width:753px;height:1px;background:#c0c0c0;"></div>
<div style="left:16px;top:496px;width:19px;height:1px;background:#606060;"></div>
<div style="left:36px;top:512px;width:753px;height:1px;background:#c0c0c0;"></div>
<div style="left:16px;top:512px;width:19px;height:1px;background:#606060;"></div>
<div style="left:294px;top:353px;width:1px;height:163px;background:#c0c0c0;"></div>
<div style="left:327px;top:353px;width:1px;height:163px;background:#c0c0c0;"></div>
<div style="left:380px;top:353px;width:1px;height:163px;background:#c0c0c0;"></div>
<div style="left:440px;top:353px;width:1px;height:163px;background:#c0c0c0;"></div>
<div style="left:507px;top:353px;width:1px;height:163px;background:#c0c0c0;"></div>
<div style="left:574px;top:353px;width:1px;height:163px;background:#c0c0c0;"></div>
<div style="left:707px;top:353px;width:1px;height:163px;background:#c0c0c0;"></div>
<div style="left:788px;top:353px;width:1px;height:163px;background:#c0c0c0;"></div>
<div style="left:35px;top:337px;width:1px;height:179px;background:#000;"></div>
<div style="left:16px;top:353px;width:19px;height:15px;background:#f2f1ee;box-shadow:inset 1px 1px 0 #fff,inset 0 -1px 0 #808080;"></div>
<div style="left:36px;top:353px;width:258px;height:15px;background:repeating-conic-gradient(#000 0% 25%,#fff 0% 50%) 0 0/2px 2px;"></div>
<div style="left:38px;top:355px;width:254px;height:11px;background:#fff;"></div>
<span style="position:absolute;left:38.80px;top:353px;line-height:16px;white-space:pre;color:#000;letter-spacing:-0.082px;font-family:'Liberation Sans',sans-serif;font-size:11px;font-weight:normal;">APE DUE COLORI TAG 8</span>
<span style="position:absolute;left:304.30px;top:353px;line-height:16px;white-space:pre;color:#000;letter-spacing:-0.2px;font-family:'Liberation Sans',sans-serif;font-size:11px;font-weight:normal;">PZ</span>
<span style="position:absolute;left:372.38px;top:353px;line-height:16px;white-space:pre;color:#000;letter-spacing:0px;font-family:'Liberation Sans',sans-serif;font-size:11px;font-weight:normal;">7</span>
<span style="position:absolute;left:411.37px;top:353px;line-height:16px;white-space:pre;color:#000;letter-spacing:-0.1px;font-family:'Liberation Sans',sans-serif;font-size:11px;font-weight:normal;">16,00</span>
<span style="position:absolute;left:473.67px;top:353px;line-height:16px;white-space:pre;color:#000;letter-spacing:-0.1px;font-family:'Liberation Sans',sans-serif;font-size:11px;font-weight:normal;">112,00</span>
<span style="position:absolute;left:511.00px;top:353px;line-height:16px;white-space:pre;color:#000;letter-spacing:-0.1px;font-family:'Liberation Sans',sans-serif;font-size:11px;font-weight:normal;">21%</span>
<span style="position:absolute;left:578.10px;top:353px;line-height:16px;white-space:pre;color:#000;letter-spacing:-0.044px;font-family:'Liberation Sans',sans-serif;font-size:11px;font-weight:normal;">8023297760299</span>
<span style="position:absolute;left:711.00px;top:353px;line-height:16px;white-space:pre;color:#000;letter-spacing:-0.12px;font-family:'Liberation Sans',sans-serif;font-size:11px;font-weight:normal;">19682</span>
<span style="position:absolute;left:38.80px;top:369px;line-height:16px;white-space:pre;color:#000;letter-spacing:-0.188px;font-family:'Liberation Sans',sans-serif;font-size:11px;font-weight:normal;">GARFIELD  TAG 7  CON CUORE.</span>
<span style="position:absolute;left:304.30px;top:369px;line-height:16px;white-space:pre;color:#000;letter-spacing:-0.2px;font-family:'Liberation Sans',sans-serif;font-size:11px;font-weight:normal;">PZ</span>
<span style="position:absolute;left:372.38px;top:369px;line-height:16px;white-space:pre;color:#000;letter-spacing:0px;font-family:'Liberation Sans',sans-serif;font-size:11px;font-weight:normal;">1</span>
<span style="position:absolute;left:411.37px;top:369px;line-height:16px;white-space:pre;color:#000;letter-spacing:-0.1px;font-family:'Liberation Sans',sans-serif;font-size:11px;font-weight:normal;">16,00</span>
<span style="position:absolute;left:478.87px;top:369px;line-height:16px;white-space:pre;color:#000;letter-spacing:-0.1px;font-family:'Liberation Sans',sans-serif;font-size:11px;font-weight:normal;">16,00</span>
<span style="position:absolute;left:511.00px;top:369px;line-height:16px;white-space:pre;color:#000;letter-spacing:-0.1px;font-family:'Liberation Sans',sans-serif;font-size:11px;font-weight:normal;">21%</span>
<span style="position:absolute;left:578.10px;top:369px;line-height:16px;white-space:pre;color:#000;letter-spacing:-0.044px;font-family:'Liberation Sans',sans-serif;font-size:11px;font-weight:normal;">5038104086694</span>
<span style="position:absolute;left:711.00px;top:369px;line-height:16px;white-space:pre;color:#000;letter-spacing:-0.12px;font-family:'Liberation Sans',sans-serif;font-size:11px;font-weight:normal;">19200</span>
<span style="position:absolute;left:38.80px;top:385px;line-height:16px;white-space:pre;color:#000;letter-spacing:-0.1px;font-family:'Liberation Sans',sans-serif;font-size:11px;font-weight:normal;">barbapapa tag 5</span>
<span style="position:absolute;left:372.38px;top:385px;line-height:16px;white-space:pre;color:#000;letter-spacing:0px;font-family:'Liberation Sans',sans-serif;font-size:11px;font-weight:normal;">5</span>
<span style="position:absolute;left:411.37px;top:385px;line-height:16px;white-space:pre;color:#000;letter-spacing:-0.1px;font-family:'Liberation Sans',sans-serif;font-size:11px;font-weight:normal;">12,00</span>
<span style="position:absolute;left:478.87px;top:385px;line-height:16px;white-space:pre;color:#000;letter-spacing:-0.1px;font-family:'Liberation Sans',sans-serif;font-size:11px;font-weight:normal;">60,00</span>
<span style="position:absolute;left:511.00px;top:385px;line-height:16px;white-space:pre;color:#000;letter-spacing:-0.1px;font-family:'Liberation Sans',sans-serif;font-size:11px;font-weight:normal;">21%</span>
<span style="position:absolute;left:38.80px;top:401px;line-height:16px;white-space:pre;color:#000;letter-spacing:-0.1px;font-family:'Liberation Sans',sans-serif;font-size:11px;font-weight:normal;">GIOCO DI SOCIETA BINGO.</span>
<span style="position:absolute;left:304.30px;top:401px;line-height:16px;white-space:pre;color:#000;letter-spacing:-0.2px;font-family:'Liberation Sans',sans-serif;font-size:11px;font-weight:normal;">PZ</span>
<span style="position:absolute;left:372.38px;top:401px;line-height:16px;white-space:pre;color:#000;letter-spacing:0px;font-family:'Liberation Sans',sans-serif;font-size:11px;font-weight:normal;">1</span>
<span style="position:absolute;left:417.38px;top:401px;line-height:16px;white-space:pre;color:#000;letter-spacing:-0.1px;font-family:'Liberation Sans',sans-serif;font-size:11px;font-weight:normal;">4,50</span>
<span style="position:absolute;left:484.88px;top:401px;line-height:16px;white-space:pre;color:#000;letter-spacing:-0.1px;font-family:'Liberation Sans',sans-serif;font-size:11px;font-weight:normal;">4,50</span>
<span style="position:absolute;left:511.00px;top:401px;line-height:16px;white-space:pre;color:#000;letter-spacing:-0.1px;font-family:'Liberation Sans',sans-serif;font-size:11px;font-weight:normal;">21%</span>
<span style="position:absolute;left:578.10px;top:401px;line-height:16px;white-space:pre;color:#000;letter-spacing:-0.044px;font-family:'Liberation Sans',sans-serif;font-size:11px;font-weight:normal;">8034139132013</span>
<span style="position:absolute;left:711.00px;top:401px;line-height:16px;white-space:pre;color:#000;letter-spacing:-0.12px;font-family:'Liberation Sans',sans-serif;font-size:11px;font-weight:normal;">06851</span>
<span style="position:absolute;left:38.80px;top:417px;line-height:16px;white-space:pre;color:#000;letter-spacing:-0.1px;font-family:'Liberation Sans',sans-serif;font-size:11px;font-weight:normal;">ZAINETTO CON COLORI CARS.</span>
<span style="position:absolute;left:304.30px;top:417px;line-height:16px;white-space:pre;color:#000;letter-spacing:-0.2px;font-family:'Liberation Sans',sans-serif;font-size:11px;font-weight:normal;">PZ</span>
<span style="position:absolute;left:372.38px;top:417px;line-height:16px;white-space:pre;color:#000;letter-spacing:0px;font-family:'Liberation Sans',sans-serif;font-size:11px;font-weight:normal;">1</span>
<span style="position:absolute;left:411.37px;top:417px;line-height:16px;white-space:pre;color:#000;letter-spacing:-0.1px;font-family:'Liberation Sans',sans-serif;font-size:11px;font-weight:normal;">12,00</span>
<span style="position:absolute;left:478.87px;top:417px;line-height:16px;white-space:pre;color:#000;letter-spacing:-0.1px;font-family:'Liberation Sans',sans-serif;font-size:11px;font-weight:normal;">12,00</span>
<span style="position:absolute;left:511.00px;top:417px;line-height:16px;white-space:pre;color:#000;letter-spacing:-0.1px;font-family:'Liberation Sans',sans-serif;font-size:11px;font-weight:normal;">21%</span>
<span style="position:absolute;left:578.10px;top:417px;line-height:16px;white-space:pre;color:#000;letter-spacing:-0.044px;font-family:'Liberation Sans',sans-serif;font-size:11px;font-weight:normal;">8422535795442</span>
<span style="position:absolute;left:711.00px;top:417px;line-height:16px;white-space:pre;color:#000;letter-spacing:-0.12px;font-family:'Liberation Sans',sans-serif;font-size:11px;font-weight:normal;">17976</span>
<span style="position:absolute;left:38.80px;top:433px;line-height:16px;white-space:pre;color:#000;letter-spacing:-0.1px;font-family:'Liberation Sans',sans-serif;font-size:11px;font-weight:normal;">PORTA FOTO WINNI</span>
<span style="position:absolute;left:304.30px;top:433px;line-height:16px;white-space:pre;color:#000;letter-spacing:-0.2px;font-family:'Liberation Sans',sans-serif;font-size:11px;font-weight:normal;">PZ</span>
<span style="position:absolute;left:372.38px;top:433px;line-height:16px;white-space:pre;color:#000;letter-spacing:0px;font-family:'Liberation Sans',sans-serif;font-size:11px;font-weight:normal;">1</span>
<span style="position:absolute;left:417.38px;top:433px;line-height:16px;white-space:pre;color:#000;letter-spacing:-0.1px;font-family:'Liberation Sans',sans-serif;font-size:11px;font-weight:normal;">5,00</span>
<span style="position:absolute;left:484.88px;top:433px;line-height:16px;white-space:pre;color:#000;letter-spacing:-0.1px;font-family:'Liberation Sans',sans-serif;font-size:11px;font-weight:normal;">5,00</span>
<span style="position:absolute;left:511.00px;top:433px;line-height:16px;white-space:pre;color:#000;letter-spacing:-0.1px;font-family:'Liberation Sans',sans-serif;font-size:11px;font-weight:normal;">21%</span>
<span style="position:absolute;left:578.10px;top:433px;line-height:16px;white-space:pre;color:#000;letter-spacing:-0.044px;font-family:'Liberation Sans',sans-serif;font-size:11px;font-weight:normal;">4895109275536</span>
<span style="position:absolute;left:711.00px;top:433px;line-height:16px;white-space:pre;color:#000;letter-spacing:-0.12px;font-family:'Liberation Sans',sans-serif;font-size:11px;font-weight:normal;">03499</span>
<span style="position:absolute;left:38.80px;top:449px;line-height:16px;white-space:pre;color:#000;letter-spacing:-0.1px;font-family:'Liberation Sans',sans-serif;font-size:11px;font-weight:normal;">PLAID NERO AZZURRO.</span>
<span style="position:absolute;left:304.30px;top:449px;line-height:16px;white-space:pre;color:#000;letter-spacing:-0.2px;font-family:'Liberation Sans',sans-serif;font-size:11px;font-weight:normal;">PZ</span>
<span style="position:absolute;left:372.38px;top:449px;line-height:16px;white-space:pre;color:#000;letter-spacing:0px;font-family:'Liberation Sans',sans-serif;font-size:11px;font-weight:normal;">2</span>
<span style="position:absolute;left:417.38px;top:449px;line-height:16px;white-space:pre;color:#000;letter-spacing:-0.1px;font-family:'Liberation Sans',sans-serif;font-size:11px;font-weight:normal;">5,00</span>
<span style="position:absolute;left:478.87px;top:449px;line-height:16px;white-space:pre;color:#000;letter-spacing:-0.1px;font-family:'Liberation Sans',sans-serif;font-size:11px;font-weight:normal;">10,00</span>
<span style="position:absolute;left:511.00px;top:449px;line-height:16px;white-space:pre;color:#000;letter-spacing:-0.1px;font-family:'Liberation Sans',sans-serif;font-size:11px;font-weight:normal;">21%</span>
<span style="position:absolute;left:578.10px;top:449px;line-height:16px;white-space:pre;color:#000;letter-spacing:-0.044px;font-family:'Liberation Sans',sans-serif;font-size:11px;font-weight:normal;">8051093692223</span>
<span style="position:absolute;left:711.00px;top:449px;line-height:16px;white-space:pre;color:#000;letter-spacing:-0.12px;font-family:'Liberation Sans',sans-serif;font-size:11px;font-weight:normal;">18655</span>
<span style="position:absolute;left:38.80px;top:465px;line-height:16px;white-space:pre;color:#000;letter-spacing:-0.1px;font-family:'Liberation Sans',sans-serif;font-size:11px;font-weight:normal;">GIOCHI MISTI POKET</span>
<span style="position:absolute;left:304.30px;top:465px;line-height:16px;white-space:pre;color:#000;letter-spacing:-0.2px;font-family:'Liberation Sans',sans-serif;font-size:11px;font-weight:normal;">PZ</span>
<span style="position:absolute;left:366.25px;top:465px;line-height:16px;white-space:pre;color:#000;letter-spacing:0px;font-family:'Liberation Sans',sans-serif;font-size:11px;font-weight:normal;">12</span>
<span style="position:absolute;left:417.38px;top:465px;line-height:16px;white-space:pre;color:#000;letter-spacing:-0.1px;font-family:'Liberation Sans',sans-serif;font-size:11px;font-weight:normal;">2,50</span>
<span style="position:absolute;left:478.87px;top:465px;line-height:16px;white-space:pre;color:#000;letter-spacing:-0.1px;font-family:'Liberation Sans',sans-serif;font-size:11px;font-weight:normal;">30,00</span>
<span style="position:absolute;left:511.00px;top:465px;line-height:16px;white-space:pre;color:#000;letter-spacing:-0.1px;font-family:'Liberation Sans',sans-serif;font-size:11px;font-weight:normal;">21%</span>
<span style="position:absolute;left:578.10px;top:465px;line-height:16px;white-space:pre;color:#000;letter-spacing:-0.044px;font-family:'Liberation Sans',sans-serif;font-size:11px;font-weight:normal;">8004817072924</span>
<span style="position:absolute;left:711.00px;top:465px;line-height:16px;white-space:pre;color:#000;letter-spacing:-0.12px;font-family:'Liberation Sans',sans-serif;font-size:11px;font-weight:normal;">16556</span>
<span style="position:absolute;left:38.80px;top:481px;line-height:16px;white-space:pre;color:#000;letter-spacing:-0.1px;font-family:'Liberation Sans',sans-serif;font-size:11px;font-weight:normal;">ANNA MONTANA AMICHE E SEGRETI</span>
<span style="position:absolute;left:304.30px;top:481px;line-height:16px;white-space:pre;color:#000;letter-spacing:-0.2px;font-family:'Liberation Sans',sans-serif;font-size:11px;font-weight:normal;">PZ</span>
<span style="position:absolute;left:372.38px;top:481px;line-height:16px;white-space:pre;color:#000;letter-spacing:0px;font-family:'Liberation Sans',sans-serif;font-size:11px;font-weight:normal;">1</span>
<span style="position:absolute;left:417.38px;top:481px;line-height:16px;white-space:pre;color:#000;letter-spacing:-0.1px;font-family:'Liberation Sans',sans-serif;font-size:11px;font-weight:normal;">9,00</span>
<span style="position:absolute;left:484.88px;top:481px;line-height:16px;white-space:pre;color:#000;letter-spacing:-0.1px;font-family:'Liberation Sans',sans-serif;font-size:11px;font-weight:normal;">9,00</span>
<span style="position:absolute;left:511.00px;top:481px;line-height:16px;white-space:pre;color:#000;letter-spacing:-0.1px;font-family:'Liberation Sans',sans-serif;font-size:11px;font-weight:normal;">21%</span>
<span style="position:absolute;left:578.10px;top:481px;line-height:16px;white-space:pre;color:#000;letter-spacing:-0.044px;font-family:'Liberation Sans',sans-serif;font-size:11px;font-weight:normal;">5010994372484</span>
<span style="position:absolute;left:711.00px;top:481px;line-height:16px;white-space:pre;color:#000;letter-spacing:-0.12px;font-family:'Liberation Sans',sans-serif;font-size:11px;font-weight:normal;">08393</span>
<span style="position:absolute;left:38.80px;top:497px;line-height:16px;white-space:pre;color:#000;letter-spacing:-0.1px;font-family:'Liberation Sans',sans-serif;font-size:11px;font-weight:normal;">CAMION PORTA MOTO</span>
<span style="position:absolute;left:304.30px;top:497px;line-height:16px;white-space:pre;color:#000;letter-spacing:-0.2px;font-family:'Liberation Sans',sans-serif;font-size:11px;font-weight:normal;">PZ</span>
<span style="position:absolute;left:372.38px;top:497px;line-height:16px;white-space:pre;color:#000;letter-spacing:0px;font-family:'Liberation Sans',sans-serif;font-size:11px;font-weight:normal;">1</span>
<span style="position:absolute;left:417.38px;top:497px;line-height:16px;white-space:pre;color:#000;letter-spacing:-0.1px;font-family:'Liberation Sans',sans-serif;font-size:11px;font-weight:normal;">4,50</span>
<span style="position:absolute;left:484.88px;top:497px;line-height:16px;white-space:pre;color:#000;letter-spacing:-0.1px;font-family:'Liberation Sans',sans-serif;font-size:11px;font-weight:normal;">4,50</span>
<span style="position:absolute;left:511.00px;top:497px;line-height:16px;white-space:pre;color:#000;letter-spacing:-0.1px;font-family:'Liberation Sans',sans-serif;font-size:11px;font-weight:normal;">21%</span>
<span style="position:absolute;left:578.10px;top:497px;line-height:16px;white-space:pre;color:#000;letter-spacing:-0.044px;font-family:'Liberation Sans',sans-serif;font-size:11px;font-weight:normal;">8027456000097</span>
<span style="position:absolute;left:711.00px;top:497px;line-height:16px;white-space:pre;color:#000;letter-spacing:-0.12px;font-family:'Liberation Sans',sans-serif;font-size:11px;font-weight:normal;">08038</span>
<div style="left:957px;top:337px;width:16px;height:179px;background:repeating-conic-gradient(#fff 0% 25%,#d4d0c8 0% 50%) 0 0/2px 2px;"></div>
<div class="dd" style="left:957px;top:337px;width:16px;height:16px;"></div>
<svg style="left:961px;top:343px" width="7" height="4"><path d="M0 4h7L3.5 0z" fill="#000"/></svg>
<div class="dd" style="left:957px;top:353px;width:16px;height:25px;"></div>
<div class="dd" style="left:957px;top:500px;width:16px;height:16px;"></div>
<svg style="left:961.5px;top:504px" width="7" height="4"><path d="M0 0h7L3.5 4z" fill="#000"/></svg>
<div class="rb2" style="left:977px;top:336px;width:21px;height:24px;"></div>
<svg style="left:983.1px;top:339.3px" width="9" height="15" viewBox="0 0 9 15"><defs><linearGradient id="g22" x1="0" y1="0" x2="1" y2="0"><stop offset="0" stop-color="#68b8f8"/><stop offset="1" stop-color="#1868d0"/></linearGradient></defs><path d="M4.5 0.2L8.6 5H6.6V10H8.6L4.5 14.8L0.4 10H2.4V5H0.4z" fill="url(#g22)" stroke="#2a70c8" stroke-width="0.5"/></svg>
<div class="rb2" style="left:977px;top:398px;width:21px;height:23px;"></div>
<svg style="left:981.7px;top:401.65px" width="13" height="13.5" viewBox="0 0 13 13.5"><path d="M6.5 0.7L12.6 7.2H9.3V12.8H3.7V7.2H0.4z" fill="#5cec3c" stroke="#1c9c18" stroke-width="1" stroke-linejoin="round"/><path d="M6.5 2.6L9.6 6H8V11.6H5V6H3.4z" fill="#98fc78" opacity="0.7"/></svg>
<div class="rb2" style="left:977px;top:426px;width:21px;height:23px;"></div>
<svg style="left:981.7px;top:430.75px" width="13" height="13.5" viewBox="0 0 13 13.5"><path d="M6.5 0.7L12.6 7.2H9.3V12.8H3.7V7.2H0.4z" transform="rotate(180 6.5 6.75)" fill="#5cec3c" stroke="#1c9c18" stroke-width="1" stroke-linejoin="round"/><path d="M6.5 2.6L9.6 6H8V11.6H5V6H3.4z" transform="rotate(180 6.5 6.75)" fill="#98fc78" opacity="0.7"/></svg>
<div class="rb2" style="left:977px;top:493px;width:21px;height:23px;"></div>
<svg style="left:980px;top:496px" width="16" height="16" viewBox="0 0 16 16"><path d="M1.5 1H5.6L7.8 3.2V13H1.5z" fill="#f4f8ff" stroke="#8088b4" stroke-width="0.7"/><path d="M7.8 5.5H13L15 7.5V14.5H7.8z" fill="#f4f8ff" stroke="#8088b4" stroke-width="0.7"/><path d="M4.5 5.4L7.6 9.4H5.9V13.8H3.1V9.4H1.4z" fill="#34cc30" stroke="#0e7a10" stroke-width="0.6" stroke-linejoin="round"/><path d="M11.5 9.6L8.4 5.6H10.1V1.2H12.9V5.6H14.6z" fill="#34cc30" stroke="#0e7a10" stroke-width="0.6" stroke-linejoin="round"/></svg>
<svg style="left:0;top:0" width="1011" height="682" viewBox="0 0 1011 682" fill="none"><path d="M15.5 588V526.5L18.5 523.5H599.5V662.5H20L15.5 657.5V596L18 592.5H38.5V662" stroke="#000" stroke-width="1"/><path d="M16 588.5L18 590.5H40" stroke="#707070" stroke-width="2"/><path d="M598.5 525V661.5H40" stroke="#808080" stroke-width="1"/><path d="M16.5 587V527L19 524.5H597" stroke="#fff" stroke-width="1"/><path d="M16.5 656V597L18.5 594H37.5" stroke="#fff" stroke-width="1" opacity="0.8"/><path d="M39.5 593.5V661" stroke="#fff" stroke-width="1"/></svg>
<div style="left:27.5px;top:556.3px;width:0;height:0;overflow:visible"><span style="position:absolute;left:-18.0px;top:-8px;line-height:16px;white-space:pre;color:#000;letter-spacing:-0.3px;font-family:'DejaVu Sans Condensed','DejaVu Sans','Liberation Sans',sans-serif;font-size:12.2px;font-weight:bold;font-stretch:condensed;transform:rotate(-90deg);transform-origin:50% 50%">Azioni</span></div>
<div style="left:27.3px;top:625.5px;width:0;height:0;overflow:visible"><span style="position:absolute;left:-12.6px;top:-8px;line-height:16px;white-space:pre;color:#000;letter-spacing:-0.1px;font-family:'DejaVu Sans Condensed','DejaVu Sans','Liberation Sans',sans-serif;font-size:12.2px;font-weight:normal;font-stretch:condensed;transform:rotate(-90deg);transform-origin:50% 50%">Altro</span></div>
<div class="rb" style="left:46px;top:532px;width:178px;height:38px;"></div>
<svg style="left:59px;top:538px" width="24" height="24" viewBox="0 0 24 24"><defs><linearGradient id="g23" x1="0" y1="0" x2="1" y2="0.4"><stop offset="0" stop-color="#fce82c"/><stop offset="1" stop-color="#f0b408"/></linearGradient><linearGradient id="g24" x1="0" y1="0" x2="1" y2="1"><stop offset="0" stop-color="#e0a418"/><stop offset="1" stop-color="#b87808"/></linearGradient></defs><path d="M0.9 3.8L10.2 8V22.2L2 17.8z" fill="url(#g23)" stroke="#c89808" stroke-width="0.5" stroke-linejoin="round"/><path d="M10.2 8L22.6 4.2V17L10.2 22.2z" fill="url(#g24)" stroke="#a87808" stroke-width="0.5" stroke-linejoin="round"/><path d="M0.9 3.8Q2 2 6 1.5L12.6 0.8L22.6 4.2L10.2 8z" fill="#fbe830" stroke="#d8b010" stroke-width="0.5" stroke-linejoin="round"/><path d="M10.2 8V22" stroke="#fff4a0" stroke-width="0.9" opacity="0.9"/><path d="M13 17.8H23M18 12.8V22.8" stroke="#0e6a10" stroke-width="4.8"/><path d="M14 17.8H22M18 13.8V21.8" stroke="#6cf050" stroke-width="2.8"/><path d="M14.4 17.1H21.6" stroke="#b8ffa0" stroke-width="0.9" opacity="0.7"/></svg>
<span style="position:absolute;left:99.20px;top:545px;line-height:16px;white-space:pre;color:#000;letter-spacing:-0.24px;font-family:'DejaVu Sans Condensed','DejaVu Sans','Liberation Sans',sans-serif;font-size:11.2px;font-weight:normal;font-stretch:condensed;">Aggiungi articolo (F4)</span>
<div class="rb" style="left:230px;top:532px;width:178px;height:38px;"></div>
<svg style="left:244px;top:538px" width="24" height="24" viewBox="0 0 24 24"><rect x="1.2" y="2.2" width="19.4" height="19.4" fill="#fdfdff" stroke="#7c7c98" stroke-width="1"/><rect x="1.8" y="8.6" width="18.2" height="6.4" fill="#f8ac38"/><path d="M7.6 2.2V21.6M14.2 2.2V21.6" stroke="#8c8ca8" stroke-width="1"/><path d="M1.2 8.4H20.6M1.2 15.2H20.6" stroke="#b0a0a8" stroke-width="0.9"/><path d="M12.2 18H22.2M17.2 13V23" stroke="#0e6a10" stroke-width="4.8"/><path d="M13.2 18H21.2M17.2 14V22" stroke="#6cf050" stroke-width="2.8"/><path d="M13.6 17.3H20.8" stroke="#b8ffa0" stroke-width="0.9" opacity="0.7"/></svg>
<span style="position:absolute;left:289.10px;top:545px;line-height:16px;white-space:pre;color:#000;letter-spacing:-0.184px;font-family:'DejaVu Sans Condensed','DejaVu Sans','Liberation Sans',sans-serif;font-size:11.2px;font-weight:normal;font-stretch:condensed;">Aggiungi altro (F3)</span>
<div class="rb" style="left:414px;top:532px;width:178px;height:38px;"></div>
<svg style="left:427px;top:538px" width="24" height="24" viewBox="0 0 24 24"><rect x="-12.2" y="-3.4" width="24.4" height="6.8" rx="2.8" transform="translate(12.4 12) rotate(50.3)" fill="#f8461c" stroke="#a82408" stroke-width="1.5"/><rect x="-13" y="-3.4" width="26" height="6.8" rx="2.8" transform="translate(11.6 12.2) rotate(-46.5)" fill="#f8461c" stroke="#a82408" stroke-width="1.5"/><rect x="-12.2" y="-3.4" width="24.4" height="6.8" rx="2.8" transform="translate(12.4 12) rotate(50.3)" fill="#f84a20"/><rect x="-13" y="-3.4" width="26" height="6.8" rx="2.8" transform="translate(11.6 12.2) rotate(-46.5)" fill="#f84a20"/></svg>
<span style="position:absolute;left:488.90px;top:545px;line-height:16px;white-space:pre;color:#000;letter-spacing:-0.553px;font-family:'DejaVu Sans Condensed','DejaVu Sans','Liberation Sans',sans-serif;font-size:11.2px;font-weight:normal;font-stretch:condensed;">Elimina linea</span>
<div class="rb" style="left:230px;top:574px;width:178px;height:38px;"></div>
<svg style="left:244px;top:580px" width="24" height="24" viewBox="0 0 24 24"><defs><linearGradient id="g25" x1="0" y1="0" x2="1" y2="0"><stop offset="0" stop-color="#ffffff"/><stop offset="1" stop-color="#dcdcf0"/></linearGradient></defs><path d="M7.6 2.6Q8 1.6 9.6 1.8L17.4 3.6Q15.4 5.4 16.4 7L15.6 15.4L7 13z" fill="url(#g25)" stroke="#c4c4d8" stroke-width="0.5"/><path d="M17.4 3.6Q20.4 3.6 21 5.6Q20.4 7.8 17.8 7.2Q19.2 6.2 18.4 5.2Q17.6 4.4 16.4 5.4" fill="#b0b0c8" stroke="#70708c" stroke-width="0.6"/><path d="M0.8 13.6Q2.4 11.4 7 13L15.6 15.4Q17.4 17.2 16.2 19.4L13.6 20.4L2.2 16.4Q0.4 15.4 0.8 13.6z" fill="#e4e4f2" stroke="#b4b4cc" stroke-width="0.5"/><path d="M2.6 14.6L13.4 18.4" stroke="#a8a8c0" stroke-width="1.2" opacity="0.8"/><path d="M3.4 13.2L14.4 16.6" stroke="#fff" stroke-width="1" opacity="0.9"/><path d="M12.899999999999999 17.8H22.9M17.9 12.8V22.8" stroke="#0e6a10" stroke-width="4.8"/><path d="M13.899999999999999 17.8H21.9M17.9 13.8V21.8" stroke="#6cf050" stroke-width="2.8"/><path d="M14.299999999999999 17.1H21.5" stroke="#b8ffa0" stroke-width="0.9" opacity="0.7"/></svg>
<span style="position:absolute;left:306.20px;top:587px;line-height:16px;white-space:pre;color:#000;letter-spacing:-0.301px;font-family:'DejaVu Sans Condensed','DejaVu Sans','Liberation Sans',sans-serif;font-size:11.2px;font-weight:normal;font-stretch:condensed;">Lista rapida</span>
<div class="rb" style="left:414px;top:574px;width:178px;height:38px;"></div>
<svg style="left:428px;top:580px" width="24" height="24" viewBox="0 0 24 24"><defs><linearGradient id="g26" x1="0" y1="0" x2="1" y2="0.3"><stop offset="0" stop-color="#3c98f8"/><stop offset="0.55" stop-color="#1460d8"/><stop offset="1" stop-color="#0838a0"/></linearGradient></defs><path d="M3.4 6.6L5.4 2.8L8 2.4L9.4 3.4L12 2.2L14 3.4L17 2.6L19.6 4.4L21 7.6L12 10L3 8.4z" fill="#fafafe" stroke="#b8bcd4" stroke-width="0.6" stroke-linejoin="round"/><path d="M8 2.6V6M12 2.4V6M15.6 3V6.4" stroke="#c8ccdc" stroke-width="0.8"/><path d="M1 7Q11.6 12.6 23 6.6Q23.4 9 22.4 17Q12.6 24 3.4 18z" fill="url(#g26)" stroke="#0c3ca4" stroke-width="0.5"/><path d="M1.4 7.6Q11.6 13 22.6 7.2" fill="none" stroke="#8cc8fc" stroke-width="1.3"/><path d="M13.2 17.8H23.2M18.2 12.8V22.8" stroke="#0e6a10" stroke-width="4.8"/><path d="M14.2 17.8H22.2M18.2 13.8V21.8" stroke="#6cf050" stroke-width="2.8"/><path d="M14.6 17.1H21.8" stroke="#b8ffa0" stroke-width="0.9" opacity="0.7"/></svg>
<span style="position:absolute;left:468.20px;top:587px;line-height:16px;white-space:pre;color:#000;letter-spacing:-0.406px;font-family:'DejaVu Sans Condensed','DejaVu Sans','Liberation Sans',sans-serif;font-size:11.2px;font-weight:normal;font-stretch:condensed;">Gruppi di inserimento</span>
<div class="rb" style="left:46px;top:615px;width:178px;height:38px;"></div>
<svg style="left:59px;top:621px" width="24" height="24" viewBox="0 0 24 24"><defs><linearGradient id="g27" x1="0" y1="0" x2="1" y2="0"><stop offset="0" stop-color="#fbe890"/><stop offset="0.55" stop-color="#f46028"/><stop offset="1" stop-color="#d82008"/></linearGradient><linearGradient id="g28" x1="0" y1="0" x2="1" y2="1"><stop offset="0" stop-color="#80f060"/><stop offset="1" stop-color="#20a820"/></linearGradient></defs><path d="M11.2 18.6H6Q4 18.2 4.2 15.8V12.4H9V14.6H11.2z" fill="url(#g28)" stroke="#107810" stroke-width="0.7" stroke-linejoin="round"/><path d="M6.6 0.3L11.2 10.3Q6 11.6 1 10.6z" fill="url(#g27)" stroke="#c03010" stroke-width="0.6" stroke-linejoin="round"/><path d="M12.8 3.2H18.4Q20 3.6 19.8 6V9.2H21.4L18 12.6L14.2 9.2H16.2V6.8H12.8z" fill="url(#g28)" stroke="#107810" stroke-width="0.7" stroke-linejoin="round"/><path d="M11.5 13.4L17.5 15.6V21.4L11.5 19z" fill="#5c9cf4" stroke="#1c48b0" stroke-width="0.5" stroke-linejoin="round"/><path d="M17.5 15.6L23 13V18.6L17.5 21.4z" fill="#1444b8" stroke="#0c3090" stroke-width="0.5" stroke-linejoin="round"/><path d="M11.5 13.4L17 11L23 13L17.5 15.6z" fill="#8cb8fa" stroke="#3060c0" stroke-width="0.5" stroke-linejoin="round"/></svg>
<span style="position:absolute;left:102.00px;top:628px;line-height:16px;white-space:pre;color:#000;letter-spacing:-0.263px;font-family:'DejaVu Sans Condensed','DejaVu Sans','Liberation Sans',sans-serif;font-size:11.2px;font-weight:normal;font-stretch:condensed;">Sostituzione articolo</span>
<div class="rb" style="left:414px;top:615px;width:178px;height:38px;"></div>
<svg style="left:427px;top:621px" width="24" height="24" viewBox="0 0 24 24"><path d="M19.6 2.6L21.2 0.8" stroke="#8890b8" stroke-width="1.3" stroke-linecap="round"/><path d="M3.8 5.6L20.2 2.6L19 14L5.6 16.6z" fill="#bccaea" stroke="#98a4cc" stroke-width="0.6" stroke-linejoin="round"/><path d="M12.4 5L19.4 3.6L18.4 13.4L12 14.4z" fill="#a4c8ee" opacity="0.9"/><path d="M4.4 6.6L11.6 5.4L10.8 12.6L5.6 13.6z" fill="#f8c0c4" opacity="0.9"/><ellipse cx="10.6" cy="4.4" rx="4.2" ry="2.6" fill="#58c834"/><path d="M5.6 16.6L19 14.4M6 16.8L6.4 18M18.4 14.6L18.2 16.4" stroke="#8088a8" stroke-width="1"/><circle cx="5.6" cy="18.8" r="1.7" fill="#34343c"/><circle cx="10.6" cy="20.6" r="1.7" fill="#34343c"/><circle cx="18" cy="17.6" r="1.6" fill="#34343c"/></svg>
<span style="position:absolute;left:499.10px;top:628px;line-height:16px;white-space:pre;color:#000;letter-spacing:-0.112px;font-family:'DejaVu Sans Condensed','DejaVu Sans','Liberation Sans',sans-serif;font-size:11.2px;font-weight:normal;font-stretch:condensed;">Carrello</span>
<div style="left:747.8px;top:528px;width:77.20000000000005px;height:16px;overflow:hidden"><span style="position:absolute;right:2.49px;top:0;line-height:16px;white-space:pre;color:#000;letter-spacing:0.209px;font-family:'DejaVu Sans Condensed','DejaVu Sans','Liberation Sans',sans-serif;font-size:12.2px;font-weight:normal;font-stretch:condensed;">Totale corpo :</span></div>
<div class="sk" style="left:825px;top:525px;width:97px;height:19px;background:#fff;"></div>
<span style="position:absolute;left:882.14px;top:527px;line-height:16px;white-space:pre;color:#000;letter-spacing:0px;font-family:'DejaVu Sans Condensed','DejaVu Sans','Liberation Sans',sans-serif;font-size:12.2px;font-weight:normal;font-stretch:condensed;">746,16</span>
<div class="sk" style="left:923px;top:525px;width:47px;height:19px;background:#d4d0c8;"></div>
<span style="position:absolute;left:924.00px;top:527px;line-height:16px;white-space:pre;color:#000;letter-spacing:-0.1px;font-family:'DejaVu Sans Condensed','DejaVu Sans','Liberation Sans',sans-serif;font-size:12.2px;font-weight:normal;font-stretch:condensed;">Corrisp.</span>
<div style="left:730.0px;top:548px;width:95.0px;height:16px;overflow:hidden"><span style="position:absolute;right:2.81px;top:0;line-height:16px;white-space:pre;color:#000;letter-spacing:-0.113px;font-family:'DejaVu Sans Condensed','DejaVu Sans','Liberation Sans',sans-serif;font-size:12.2px;font-weight:normal;font-stretch:condensed;">Spese di incasso :</span></div>
<div class="sk" style="left:825px;top:546px;width:97px;height:19px;background:#fff;"></div>
<span style="position:absolute;left:896.09px;top:548px;line-height:16px;white-space:pre;color:#000;letter-spacing:0px;font-family:'DejaVu Sans Condensed','DejaVu Sans','Liberation Sans',sans-serif;font-size:12.2px;font-weight:normal;font-stretch:condensed;">0,00</span>
<div style="left:725.8px;top:569px;width:99.20000000000005px;height:16px;overflow:hidden"><span style="position:absolute;right:1.76px;top:0;line-height:16px;white-space:pre;color:#000;letter-spacing:-0.055px;font-family:'DejaVu Sans Condensed','DejaVu Sans','Liberation Sans',sans-serif;font-size:12.2px;font-weight:normal;font-stretch:condensed;">Spese spedizione :</span></div>
<div class="sk" style="left:825px;top:567px;width:97px;height:19px;background:#fff;"></div>
<span style="position:absolute;left:896.09px;top:569px;line-height:16px;white-space:pre;color:#000;letter-spacing:0px;font-family:'DejaVu Sans Condensed','DejaVu Sans','Liberation Sans',sans-serif;font-size:12.2px;font-weight:normal;font-stretch:condensed;">0,00</span>
<div class="sk" style="left:923px;top:567px;width:46px;height:19px;background:#d4d0c8;"></div>
<span style="position:absolute;left:924.00px;top:569px;line-height:16px;white-space:pre;color:#000;letter-spacing:-0.1px;font-family:'DejaVu Sans Condensed','DejaVu Sans','Liberation Sans',sans-serif;font-size:12.2px;font-weight:normal;font-stretch:condensed;">€</span>
<div style="left:737.5999999999999px;top:590px;width:87.40000000000009px;height:16px;overflow:hidden"><span style="position:absolute;right:2.74px;top:0;line-height:16px;white-space:pre;color:#000;letter-spacing:-0.039px;font-family:'DejaVu Sans Condensed','DejaVu Sans','Liberation Sans',sans-serif;font-size:12.2px;font-weight:normal;font-stretch:condensed;">Totale imposte :</span></div>
<div class="sk" style="left:825px;top:588px;width:97px;height:19px;background:#fff;"></div>
<span style="position:absolute;left:882.14px;top:590px;line-height:16px;white-space:pre;color:#000;letter-spacing:0px;font-family:'DejaVu Sans Condensed','DejaVu Sans','Liberation Sans',sans-serif;font-size:12.2px;font-weight:normal;font-stretch:condensed;">156,69</span>
<div class="sk" style="left:923px;top:588px;width:46px;height:19px;background:#d4d0c8;"></div>
<span style="position:absolute;left:924.00px;top:590px;line-height:16px;white-space:pre;color:#000;letter-spacing:-0.1px;font-family:'DejaVu Sans Condensed','DejaVu Sans','Liberation Sans',sans-serif;font-size:12.2px;font-weight:normal;font-stretch:condensed;">€</span>
<div style="left:717.0999999999999px;top:611px;width:107.90000000000009px;height:16px;overflow:hidden"><span style="position:absolute;right:2.57px;top:0;line-height:16px;white-space:pre;color:#000;letter-spacing:0.13px;font-family:'DejaVu Sans Condensed','DejaVu Sans','Liberation Sans',sans-serif;font-size:12.2px;font-weight:normal;font-stretch:condensed;">Totale documento :</span></div>
<div class="sk" style="left:825px;top:608px;width:97px;height:19px;background:#fff;"></div>
<span style="position:absolute;left:879.19px;top:610px;line-height:16px;white-space:pre;color:#000;letter-spacing:-0.2px;font-family:'DejaVu Sans Condensed','DejaVu Sans','Liberation Sans',sans-serif;font-size:12.2px;font-weight:bold;font-stretch:condensed;">902,85</span>
<div class="sk" style="left:923px;top:608px;width:46px;height:19px;background:#d4d0c8;"></div>
<span style="position:absolute;left:924.00px;top:610px;line-height:16px;white-space:pre;color:#000;letter-spacing:-0.1px;font-family:'DejaVu Sans Condensed','DejaVu Sans','Liberation Sans',sans-serif;font-size:12.2px;font-weight:normal;font-stretch:condensed;">€</span>
<div class="rb" style="left:973px;top:525px;width:19px;height:20px;"></div>
<span style="position:absolute;left:979.00px;top:528px;line-height:16px;white-space:pre;color:#000;letter-spacing:-0.1px;font-family:'DejaVu Sans Condensed','DejaVu Sans','Liberation Sans',sans-serif;font-size:12.2px;font-weight:normal;font-stretch:condensed;">?</span>
<div class="rb" style="left:973px;top:608px;width:19px;height:20px;"></div>
<svg style="left:974.6px;top:608.8px" width="18" height="18" viewBox="0 0 18 18"><path d="M9 9.4L15.4 17" stroke="#c87818" stroke-width="3.2" stroke-linecap="round"/><path d="M9 9.4L15.4 17" stroke="#f8b048" stroke-width="1.8" stroke-linecap="round"/><circle cx="6" cy="6" r="4.4" fill="#c8f0e8" stroke="#58a8b8" stroke-width="1.1"/><path d="M3.4 6H8.6M6 3.4V8.6" stroke="#18a018" stroke-width="1.7"/></svg>
<div style="left:730.4px;top:638px;width:61.60000000000002px;height:16px;overflow:hidden"><span style="position:absolute;right:2.63px;top:0;line-height:16px;white-space:pre;color:#000;letter-spacing:-0.135px;font-family:'DejaVu Sans Condensed','DejaVu Sans','Liberation Sans',sans-serif;font-size:12.2px;font-weight:normal;font-stretch:condensed;">Peso lordo :</span></div>
<div class="sk" style="left:795px;top:637px;width:68px;height:20px;background:#fff;"></div>
<span style="position:absolute;left:851.92px;top:639px;line-height:16px;white-space:pre;color:#000;letter-spacing:-0.1px;font-family:'DejaVu Sans Condensed','DejaVu Sans','Liberation Sans',sans-serif;font-size:12.2px;font-weight:normal;font-stretch:condensed;">0</span>
<div style="left:875.2px;top:638px;width:44.799999999999955px;height:16px;overflow:hidden"><span style="position:absolute;right:2.52px;top:0;line-height:16px;white-space:pre;color:#000;letter-spacing:-0.219px;font-family:'DejaVu Sans Condensed','DejaVu Sans','Liberation Sans',sans-serif;font-size:12.2px;font-weight:normal;font-stretch:condensed;">Volume :</span></div>
<div class="sk" style="left:921px;top:637px;width:55px;height:20px;background:#fff;"></div>
<span style="position:absolute;left:965.12px;top:639px;line-height:16px;white-space:pre;color:#000;letter-spacing:-0.1px;font-family:'DejaVu Sans Condensed','DejaVu Sans','Liberation Sans',sans-serif;font-size:12.2px;font-weight:normal;font-stretch:condensed;">0</span>
</body></html>
